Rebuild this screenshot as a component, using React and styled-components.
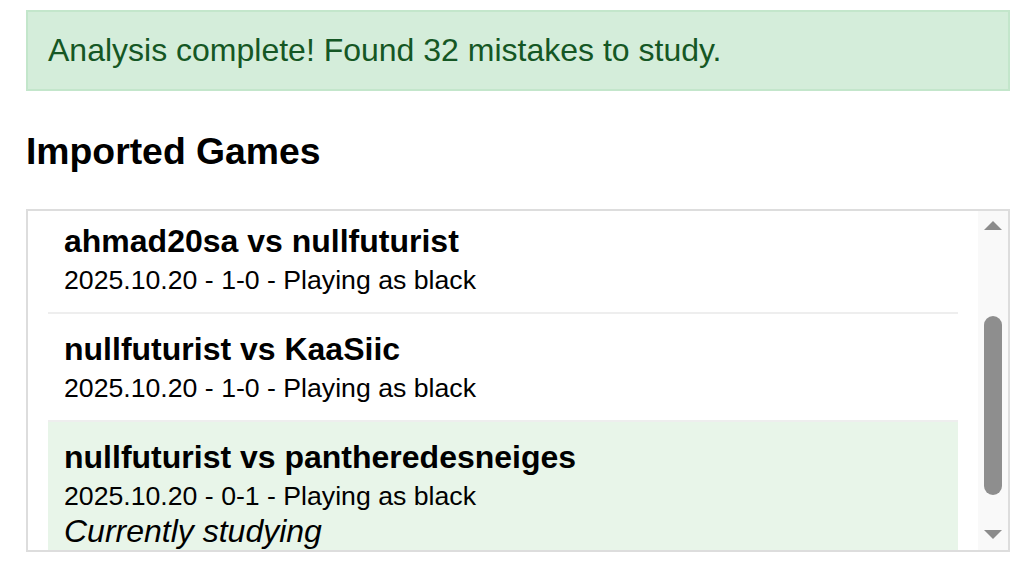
import styled, { createGlobalStyle } from "styled-components";

const GlobalStyle = createGlobalStyle`
    body {
        margin: 0;
        background: #fff;
        color: #000;
        font-family: "Liberation Sans", Arial, sans-serif;
    }
`;

const games = [
    { white: "ahmad20sa", black: "nullfuturist", date: "2025.10.20", result: "1-0", side: "black" },
    { white: "nullfuturist", black: "KaaSiic", date: "2025.10.20", result: "1-0", side: "black" },
    { white: "nullfuturist", black: "pantheredesneiges", date: "2025.10.20", result: "0-1", side: "black", current: true },
];

const App = () => {
    return (
        <>
            <GlobalStyle />
            <Page>
                <Alert>Analysis complete! Found 32 mistakes to study.</Alert>
                <Heading>Imported Games</Heading>
                <ListBox>
                    <ListScroll>
                        {games.map((g, i) => (
                            <Item key={i} $active={g.current}>
                                <Title>{g.white} vs {g.black}</Title>
                                <Meta>{g.date} - {g.result} - Playing as {g.side}</Meta>
                                {g.current && <Note>Currently studying</Note>}
                            </Item>
                        ))}
                    </ListScroll>
                    <Scrollbar>
                        <ArrowButton><Arrow $dir="up" /></ArrowButton>
                        <Track><Thumb /></Track>
                        <ArrowButton><Arrow $dir="down" /></ArrowButton>
                    </Scrollbar>
                </ListBox>
            </Page>
        </>
    );
};

const Page = styled.div`
    padding: 10px 26px;
`;

const Alert = styled.div`
    background: #d4edda;
    border: 2px solid #c3e6cb;
    color: #155724;
    padding: 20px;
    font-size: 32px;
`;

const Heading = styled.h3`
    font-size: 37.33px;
    font-weight: bold;
    margin: 39px 0 35.66px;
`;

const ListBox = styled.div`
    display: flex;
    height: 343px;
    box-sizing: border-box;
    border: 2px solid #ddd;
`;

const ListScroll = styled.div`
    flex: 1;
    overflow: hidden;
    padding: 0 20px;
`;

const Item = styled.div`
    padding: 17px 16px 16px;
    border-bottom: 2px solid #eee;
    background: ${(p) => (p.$active ? "#e8f5e9" : "transparent")};

    &:first-child {
        margin-top: -5px;
    }
`;

const Title = styled.div`
    font-size: 32px;
    font-weight: bold;
    margin-bottom: 5px;
`;

const Meta = styled.div`
    font-size: 26.67px;
`;

const Note = styled.div`
    font-size: 32px;
    font-style: italic;
    margin-top: 1px;
`;

const Scrollbar = styled.div`
    width: 30px;
    display: flex;
    flex-direction: column;
    align-items: center;
    background: #f9f9f9;
`;

const ArrowButton = styled.div`
    height: 30px;
    width: 100%;
    display: flex;
    align-items: center;
    justify-content: center;
`;

const Arrow = styled.div`
    width: 0;
    height: 0;
    border-left: 9px solid transparent;
    border-right: 9px solid transparent;
    ${(p) => p.$dir === "up"
        ? "border-bottom: 9px solid #8c8c8c;"
        : "border-top: 9px solid #8c8c8c;"}
`;

const Track = styled.div`
    flex: 1;
    display: flex;
    justify-content: center;
`;

const Thumb = styled.div`
    width: 18px;
    height: 179px;
    margin-top: 75px;
    border-radius: 9px;
    background: #8e8e8e;
`;

export default App;
